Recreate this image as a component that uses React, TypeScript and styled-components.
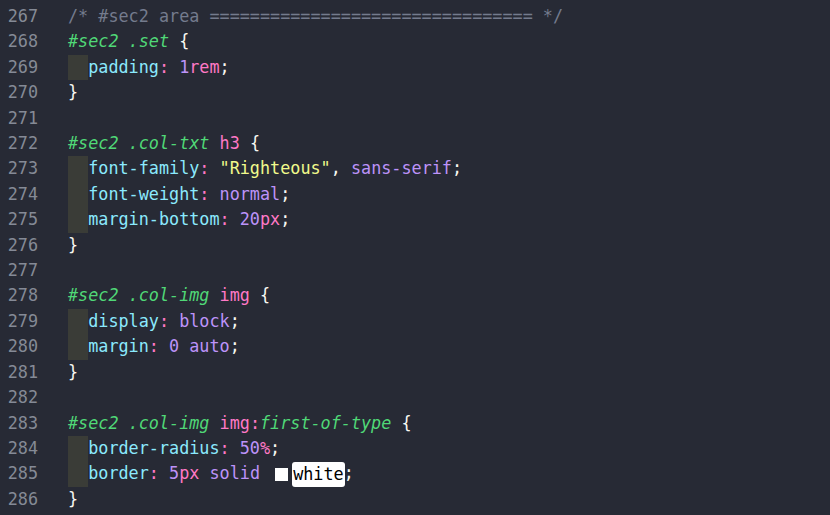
import React from "react";
import styled, { createGlobalStyle } from "styled-components";

const Global = createGlobalStyle`
  html, body { margin: 0; padding: 0; background: #272a35; }
  body { width: 830px; height: 515px; overflow: hidden; }
`;

type Kind = "cm" | "sel" | "tag" | "prop" | "p" | "num" | "unit" | "kw" | "str" | "txt" | "it";
type Tok = [Kind, string];

const colors: Record<Kind, string> = {
  cm: "#747b8d",
  sel: "#50d877",
  it: "#50d877",
  tag: "#ff79c6",
  prop: "#8be9fd",
  p: "#ff79c6",
  num: "#bd93f9",
  unit: "#ff79c6",
  kw: "#bd93f9",
  str: "#f1fa8c",
  txt: "#f8f8f2",
};

const Editor = styled.div`
  display: flex;
  flex-direction: column;
  padding-top: 4px;
  font-family: "DejaVu Sans Mono", "Liberation Mono", monospace;
  font-size: 16.8px;
  background: #272a35;
  height: 515px;
  box-sizing: border-box;
`;

const Row = styled.div`
  display: flex;
  align-items: stretch;
  height: 25.42px;
  line-height: 25.42px;
  white-space: pre;
`;

const Gutter = styled.div`
  width: 38px;
  margin-right: 30px;
  text-align: right;
  color: #858a96;
  flex: none;
`;

const Code = styled.div`
  display: flex;
  align-items: stretch;
`;

const Indent = styled.span`
  display: inline-block;
  width: 2ch;
  background: #3a3c37;
`;

const Token = styled.span<{ $kind: Kind }>`
  color: ${(p) => colors[p.$kind]};
  font-style: ${(p) => (p.$kind === "sel" || p.$kind === "it" ? "italic" : "normal")};
`;

const Swatch = styled.span`
  display: inline-block;
  align-self: center;
  width: 13px;
  height: 13px;
  margin: 0 5px 0 5px;
  background: #ffffff;
`;

const Highlight = styled.span`
  display: inline-block;
  align-self: center;
  height: 25px;
  line-height: 25px;
  margin: 0 -1px;
  padding: 0 1px;
  background: #ffffff;
  color: #000000;
  border-radius: 3px;
`;

type Line = { n: number; indent?: boolean; toks: Tok[]; swatch?: boolean; hl?: string; tail?: Tok[] };

const lines: Line[] = [
  { n: 267, toks: [["cm", "/* #sec2 area " + "=".repeat(32) + " */"]] },
  { n: 268, toks: [["sel", "#sec2 .set"], ["txt", " {"]] },
  { n: 269, indent: true, toks: [["prop", "padding"], ["p", ":"], ["txt", " "], ["num", "1"], ["unit", "rem"], ["txt", ";"]] },
  { n: 270, toks: [["txt", "}"]] },
  { n: 271, toks: [] },
  { n: 272, toks: [["sel", "#sec2 .col-txt"], ["txt", " "], ["tag", "h3"], ["txt", " {"]] },
  { n: 273, indent: true, toks: [["prop", "font-family"], ["p", ":"], ["txt", " "], ["str", "\"Righteous\""], ["txt", ", "], ["kw", "sans-serif"], ["txt", ";"]] },
  { n: 274, indent: true, toks: [["prop", "font-weight"], ["p", ":"], ["txt", " "], ["kw", "normal"], ["txt", ";"]] },
  { n: 275, indent: true, toks: [["prop", "margin-bottom"], ["p", ":"], ["txt", " "], ["num", "20"], ["unit", "px"], ["txt", ";"]] },
  { n: 276, toks: [["txt", "}"]] },
  { n: 277, toks: [] },
  { n: 278, toks: [["sel", "#sec2 .col-img"], ["txt", " "], ["tag", "img"], ["txt", " {"]] },
  { n: 279, indent: true, toks: [["prop", "display"], ["p", ":"], ["txt", " "], ["kw", "block"], ["txt", ";"]] },
  { n: 280, indent: true, toks: [["prop", "margin"], ["p", ":"], ["txt", " "], ["num", "0"], ["txt", " "], ["kw", "auto"], ["txt", ";"]] },
  { n: 281, toks: [["txt", "}"]] },
  { n: 282, toks: [] },
  { n: 283, toks: [["sel", "#sec2 .col-img"], ["txt", " "], ["tag", "img"], ["p", ":"], ["it", "first-of-type"], ["txt", " {"]] },
  { n: 284, indent: true, toks: [["prop", "border-radius"], ["p", ":"], ["txt", " "], ["num", "50"], ["unit", "%"], ["txt", ";"]] },
  {
    n: 285,
    indent: true,
    toks: [["prop", "border"], ["p", ":"], ["txt", " "], ["num", "5"], ["unit", "px"], ["txt", " "], ["kw", "solid"], ["txt", " "]],
    swatch: true,
    hl: "white",
    tail: [["txt", ";"]],
  },
  { n: 286, toks: [["txt", "}"]] },
];

export default function App() {
  return (
    <>
      <Global />
      <Editor>
        {lines.map((l) => (
          <Row key={l.n}>
            <Gutter>{l.n}</Gutter>
            <Code>
              {l.indent && <Indent />}
              {l.toks.map(([k, t], i) => (
                <Token key={i} $kind={k}>
                  {t}
                </Token>
              ))}
              {l.swatch && <Swatch />}
              {l.hl && <Highlight>{l.hl}</Highlight>}
              {l.tail &&
                l.tail.map(([k, t], i) => (
                  <Token key={"t" + i} $kind={k}>
                    {t}
                  </Token>
                ))}
            </Code>
          </Row>
        ))}
      </Editor>
    </>
  );
}
